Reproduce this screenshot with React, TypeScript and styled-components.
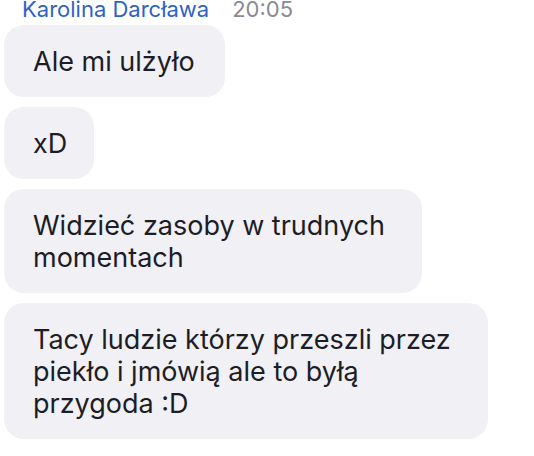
import React from "react";
import styled, { createGlobalStyle } from "styled-components";

const Global = createGlobalStyle`
  html, body { margin: 0; padding: 0; background: #ffffff; }
  body { font-family: Inter, "Noto Sans", sans-serif; -webkit-font-smoothing: antialiased; }
`;

const Thread = styled.div`
  display: flex;
  flex-direction: column;
  align-items: flex-start;
  gap: 10px;
  padding: 0 0 0 4px;
  overflow: hidden;
  height: 456px;
  box-sizing: border-box;
`;

const Header = styled.div`
  display: flex;
  align-items: baseline;
  gap: 23px;
  margin: -3px 0 -6px 18px;
  font-size: 22px;
  line-height: 24px;
  white-space: nowrap;
`;

const Sender = styled.span`
  color: #2f62c6;
`;

const Time = styled.span`
  color: #8a8a90;
`;

const Bubble = styled.div<{ $w: number }>`
  width: ${(p) => p.$w}px;
  box-sizing: border-box;
  background: #f0f0f5;
  border-radius: 20px;
  padding: 21px 0 19px 29px;
  font-size: 27px;
  line-height: 32px;
  color: #1d1d26;
  white-space: nowrap;
`;

const Line = styled.span`
  display: block;
`;

const messages: { w: number; lines: string[] }[] = [
  { w: 221, lines: ["Ale mi ulżyło"] },
  { w: 90, lines: ["xD"] },
  { w: 418, lines: ["Widzieć zasoby w trudnych", "momentach"] },
  { w: 484, lines: ["Tacy ludzie którzy przeszli przez", "piekło i jmówią ale to byłą", "przygoda :D"] },
];

export default function App() {
  return (
    <>
      <Global />
      <Thread>
        <Header>
          <Sender>Karolina Darcława</Sender>
          <Time>20:05</Time>
        </Header>
        {messages.map((m, i) => (
          <Bubble key={i} $w={m.w}>
            {m.lines.map((l, j) => (
              <Line key={j}>{l}</Line>
            ))}
          </Bubble>
        ))}
      </Thread>
    </>
  );
}
